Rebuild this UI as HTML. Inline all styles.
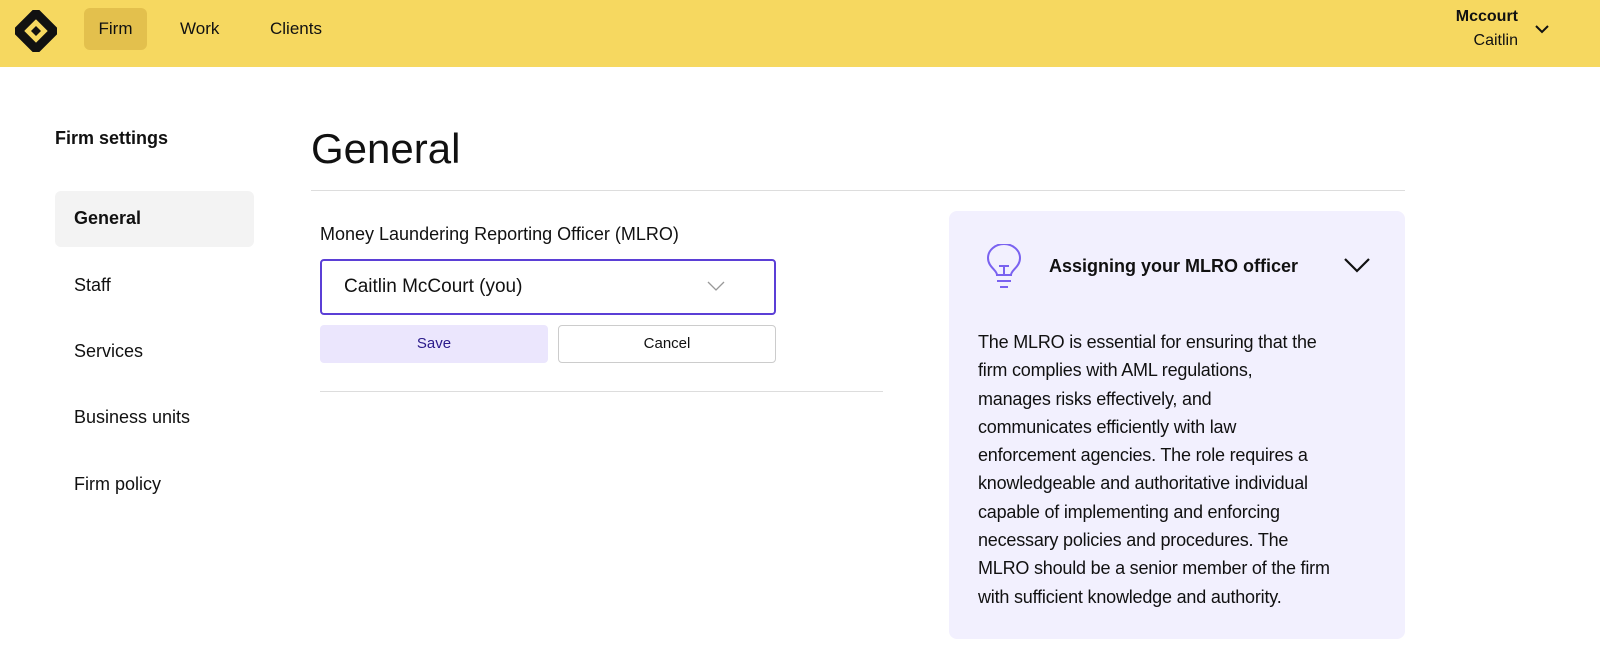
<!DOCTYPE html>
<html><head><style>
*{margin:0;padding:0;box-sizing:border-box}
body{width:1600px;height:668px;background:#fff;font-family:"Liberation Sans",sans-serif;color:#111;position:relative;overflow:hidden}
.top{position:absolute;left:0;top:0;width:1600px;height:67px;background:#f6d860}
.nav{position:absolute;top:8px;height:42px;line-height:42px;font-size:17px;color:#111;padding:0 14px;border-radius:6px}
.abs{position:absolute}
.side{position:absolute;left:74px;font-size:18px}
p.txt{position:absolute;left:978px;top:328px;white-space:nowrap;font-size:18px;line-height:28.3px;color:#111;letter-spacing:-0.2px}
</style></head><body>
<div class="top"></div>
<svg class="abs" style="left:15px;top:10px" width="42" height="42" viewBox="0 0 42 42">
<path d="M21 3L39 21 21 39 3 21z" fill="none" stroke="#111" stroke-width="9" stroke-linejoin="round"/>
<path d="M11 22L22 11" stroke="#f6d860" stroke-width="4"/>
<path d="M21 16L26 21 21 26 16 21z" fill="#111"/>
</svg>
<div class="nav" style="left:84px;width:63px;background:#e3c04d;text-align:center">Firm</div>
<div class="nav" style="left:166px">Work</div>
<div class="nav" style="left:256px">Clients</div>
<div class="abs" style="right:82px;top:8px;font-size:16px;font-weight:bold;text-align:right">Mccourt</div>
<div class="abs" style="right:82px;top:32px;font-size:16px;text-align:right">Caitlin</div>
<svg class="abs" style="left:1534px;top:24px" width="16" height="10"><path d="M2 2l6 6 6-6" fill="none" stroke="#111" stroke-width="2"/></svg>

<div class="abs" style="left:55px;top:128px;font-size:18px;font-weight:bold">Firm settings</div>
<div class="abs" style="left:55px;top:191px;width:199px;height:56px;background:#f3f3f3;border-radius:6px"></div>
<div class="side" style="top:208px;font-weight:bold">General</div>
<div class="side" style="top:275px">Staff</div>
<div class="side" style="top:341px">Services</div>
<div class="side" style="top:407px">Business units</div>
<div class="side" style="top:474px">Firm policy</div>

<div class="abs" style="left:311px;top:125px;font-size:42px">General</div>
<div class="abs" style="left:311px;top:190px;width:1094px;height:1px;background:#ddd"></div>
<div class="abs" style="left:320px;top:224px;font-size:18px">Money Laundering Reporting Officer (MLRO)</div>
<div class="abs" style="left:320px;top:259px;width:456px;height:56px;border:2px solid #5b3fd6;border-radius:4px"></div>
<div class="abs" style="left:344px;top:276px;font-size:19px">Caitlin McCourt (you)</div>
<svg class="abs" style="left:707px;top:280px" width="18" height="12"><path d="M1 2l8 8 8-8" fill="none" stroke="#999" stroke-width="1.3"/></svg>
<div class="abs" style="left:320px;top:325px;width:228px;height:38px;background:#ebe6fd;border-radius:4px;text-align:center;line-height:38px;font-size:15px;color:#2a1a8a">Save</div>
<div class="abs" style="left:558px;top:325px;width:218px;height:38px;border:1px solid #ccc;border-radius:4px;text-align:center;line-height:36px;font-size:15px">Cancel</div>
<div class="abs" style="left:320px;top:391px;width:563px;height:1px;background:#ddd"></div>

<div class="abs" style="left:949px;top:211px;width:456px;height:428px;background:#f2f0fe;border-radius:8px"></div>
<svg class="abs" style="left:984px;top:244px" width="40" height="48" viewBox="0 0 40 48"><path d="M13 31c0-5-9-8-9-17a16 14 0 0 1 32 0c0 9-9 12-9 17z" fill="none" stroke="#7a62f0" stroke-width="2"/><path d="M15 22h10M20 22v9M13 37h14M16 43h8" stroke="#7a62f0" stroke-width="2"/></svg>
<div class="abs" style="left:1049px;top:256px;font-size:18px;font-weight:bold">Assigning your MLRO officer</div>
<svg class="abs" style="left:1343px;top:257px" width="28" height="16"><path d="M2 2l12 12 12-12" fill="none" stroke="#111" stroke-width="2.2"/></svg>
<p class="txt">The MLRO is essential for ensuring that the<br>firm complies with AML regulations,<br>manages risks effectively, and<br>communicates efficiently with law<br>enforcement agencies. The role requires a<br>knowledgeable and authoritative individual<br>capable of implementing and enforcing<br>necessary policies and procedures. The<br>MLRO should be a senior member of the firm<br>with sufficient knowledge and authority.</p>
</body></html>
